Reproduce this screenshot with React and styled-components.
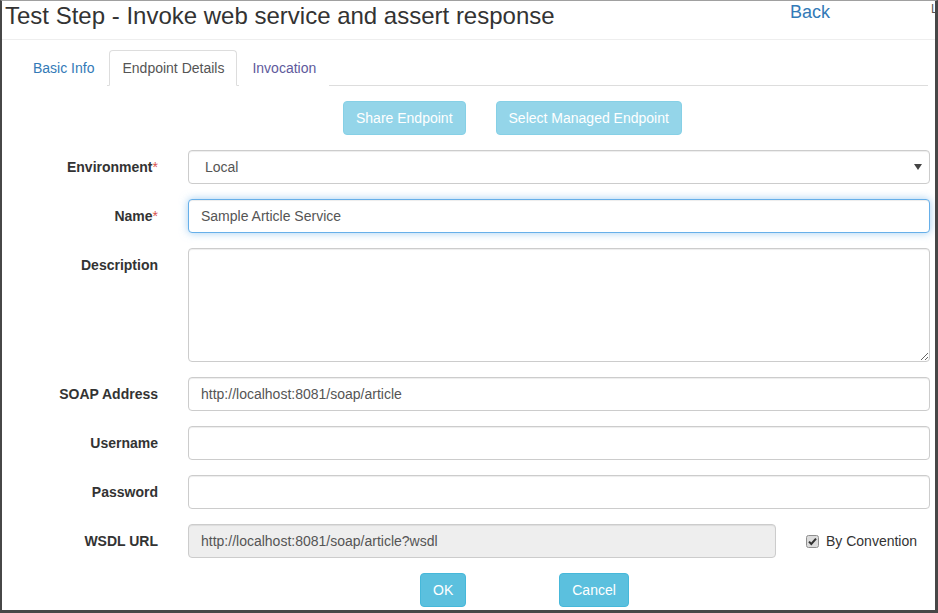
import React from 'react';
import styled, { createGlobalStyle } from 'styled-components';

const GlobalStyle = createGlobalStyle`
  * { box-sizing: border-box; }
  body {
    margin: 0;
    background: #fff;
    font-family: 'Liberation Sans', Arial, sans-serif;
    font-size: 14px;
    color: #333;
  }
`;

const Frame = styled.div`
  width: 938px;
  height: 613px;
  border-top: 1px solid #a0a0a0;
  border-left: 2px solid #474747;
  border-right: 3px solid #474747;
  border-bottom: 3px solid #474747;
  overflow: hidden;
  background: #fff;
`;

const Header = styled.header`
  display: grid;
  grid-template-columns: 785px 141px 1fr;
  height: 39px;
  padding-left: 3px;
  border-bottom: 1px solid #eee;
  overflow: hidden;
`;

const Title = styled.h1`
  margin: 2px 0 0;
  font-size: 24px;
  line-height: 26px;
  font-weight: normal;
  color: #333;
  white-space: nowrap;
`;

const BackLink = styled.a`
  margin-top: 1px;
  font-size: 18px;
  line-height: 20px;
  color: #337ab7;
  text-decoration: none;
`;

const Clipped = styled.span`
  margin-top: 1px;
  font-size: 12px;
  line-height: 14px;
  color: #555;
`;

const Tabs = styled.ul`
  display: flex;
  list-style: none;
  margin: 10px 7px 0 18px;
  padding: 0;
  border-bottom: 1px solid #ddd;
`;

const Tab = styled.li`
  margin-right: 2px;
  margin-bottom: -1px;
  padding: 8px 12px;
  line-height: 18px;
  border: 1px solid ${p => (p.$active ? '#ddd' : 'transparent')};
  border-bottom-color: ${p => (p.$active ? '#fff' : 'transparent')};
  border-radius: 4px 4px 0 0;
  background: #fff;
  color: ${p => (p.$active ? '#555' : p.$visited ? '#5e5a9c' : '#337ab7')};
`;

const ActionRow = styled.div`
  display: flex;
  gap: ${p => p.$gap}px;
  margin-top: ${p => p.$top}px;
  padding-left: ${p => p.$offset}px;
`;

const Button = styled.button`
  height: 34px;
  padding: 6px 12px;
  font-family: inherit;
  font-size: 14px;
  line-height: 20px;
  color: #fff;
  background: #5bc0de;
  border: 1px solid #46b8da;
  border-radius: 4px;
  opacity: ${p => (p.disabled ? 0.65 : 1)};
`;

const Form = styled.form`
  margin-top: 15px;
  padding-right: 5px;
`;

const Row = styled.div`
  display: grid;
  grid-template-columns: 156px 1fr;
  column-gap: 30px;
  margin-bottom: 15px;
`;

const Label = styled.label`
  padding-top: 8px;
  text-align: right;
  font-weight: bold;
  line-height: 18px;
  color: #333;
`;

const Required = styled.span`
  color: #d9534f;
  font-weight: normal;
`;

const fieldBase = `
  width: 100%;
  border: 1px solid #ccc;
  border-radius: 4px;
  font-family: 'Liberation Sans', Arial, sans-serif;
  font-size: 14px;
  color: #555;
  background: #fff;
  box-shadow: inset 0 1px 1px rgba(0, 0, 0, 0.075);
  outline: none;
`;

const Input = styled.input`
  ${fieldBase}
  height: 34px;
  padding: 6px 12px;
  background: ${p => (p.readOnly ? '#eee' : '#fff')};
  ${p =>
    p.$focused &&
    `border-color: #66afe9;
     box-shadow: inset 0 1px 1px rgba(0,0,0,.075), 0 0 8px rgba(102,175,233,.6);`}
`;

const TextArea = styled.textarea`
  ${fieldBase}
  display: block;
  height: 114px;
  padding: 6px 12px;
  resize: vertical;
`;

const SelectWrap = styled.div`
  position: relative;
`;

const Select = styled.select`
  ${fieldBase}
  height: 34px;
  padding: 6px 16px;
  appearance: none;
`;

const Arrow = styled.svg`
  position: absolute;
  right: 8px;
  top: 14px;
  pointer-events: none;
`;

const InlineField = styled.div`
  display: flex;
  align-items: center;
`;

const CheckLabel = styled.label`
  display: flex;
  align-items: center;
  flex: 0 0 154px;
  padding-left: 30px;
  gap: 7px;
  color: #333;
`;

const CheckIcon = () => (
  <svg width="13" height="13" viewBox="0 0 13 13">
    <rect x="0.5" y="0.5" width="12" height="12" rx="2" fill="#dcdcdc" stroke="#8f8f8f" />
    <path d="M3 6.6 L5.3 9 L10 3.6" fill="none" stroke="#333" strokeWidth="2" />
  </svg>
);

const fields = [
  { label: 'SOAP Address', value: 'http://localhost:8081/soap/article' },
  { label: 'Username', value: '' },
  { label: 'Password', value: '', type: 'password' },
];

export default function App() {
  return (
    <Frame>
      <GlobalStyle />
      <Header>
        <Title>Test Step - Invoke web service and assert response</Title>
        <BackLink href="#">Back</BackLink>
        <Clipped>L</Clipped>
      </Header>

      <Tabs>
        <Tab>Basic Info</Tab>
        <Tab $active>Endpoint Details</Tab>
        <Tab $visited>Invocation</Tab>
      </Tabs>

      <ActionRow $top={15} $offset={341} $gap={30}>
        <Button type="button" disabled>Share Endpoint</Button>
        <Button type="button" disabled>Select Managed Endpoint</Button>
      </ActionRow>

      <Form onSubmit={e => e.preventDefault()}>
        <Row>
          <Label htmlFor="env">
            Environment<Required>*</Required>
          </Label>
          <SelectWrap>
            <Select id="env" defaultValue="Local">
              <option>Local</option>
            </Select>
            <Arrow width="8" height="6" viewBox="0 0 8 6">
              <path d="M0 0 H8 L4 6 Z" fill="#444" />
            </Arrow>
          </SelectWrap>
        </Row>
        <Row>
          <Label htmlFor="name">
            Name<Required>*</Required>
          </Label>
          <Input id="name" $focused defaultValue="Sample Article Service" />
        </Row>
        <Row>
          <Label htmlFor="desc">Description</Label>
          <TextArea id="desc" rows={5} />
        </Row>
        {fields.map(f => (
          <Row key={f.label}>
            <Label>{f.label}</Label>
            <Input type={f.type || 'text'} defaultValue={f.value} />
          </Row>
        ))}
        <Row>
          <Label>WSDL URL</Label>
          <InlineField>
            <Input readOnly defaultValue="http://localhost:8081/soap/article?wsdl" />
            <CheckLabel>
              <CheckIcon />
              By Convention
            </CheckLabel>
          </InlineField>
        </Row>
      </Form>

      <ActionRow $top={0} $offset={418} $gap={93}>
        <Button type="submit">OK</Button>
        <Button type="button">Cancel</Button>
      </ActionRow>
    </Frame>
  );
}
